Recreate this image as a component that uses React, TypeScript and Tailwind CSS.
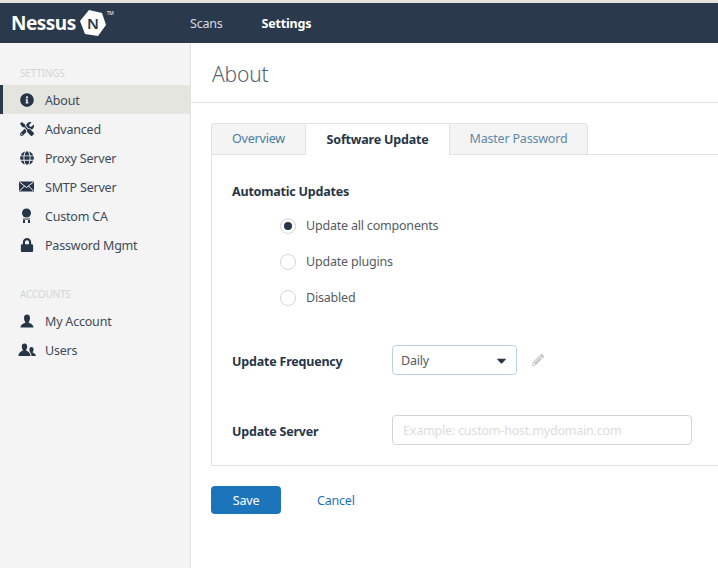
import React from 'react';
import { FaInfoCircle, FaGlobe, FaLock, FaTools, FaPencilAlt, FaCaretDown } from 'react-icons/fa';

type IconProps = { size?: number };

const MailIcon = ({ size = 15 }: IconProps) => (
  <svg width={size} height={size} viewBox="0 0 15 15">
    <rect x="0" y="2.5" width="15" height="10" fill="currentColor" />
    <path d="M0.5 3 L7.5 8.5 L14.5 3 M0.5 12 L5.5 7 M14.5 12 L9.5 7" stroke="#f4f4f4" strokeWidth="1" fill="none" />
  </svg>
);

const RibbonIcon = ({ size = 15 }: IconProps) => (
  <svg width={size} height={size} viewBox="0 0 15 15">
    <circle cx="7.5" cy="5" r="4.5" fill="currentColor" />
    <path d="M4 10.5 H11 V11.5 H4 Z M4 12 H6 V15 H4 Z M9 12 H11 V15 H9 Z" fill="currentColor" />
  </svg>
);

const UserIcon = ({ size = 14 }: IconProps) => (
  <svg width={size} height={size} viewBox="0 0 14 14">
    <path d="M7 0.5 C9 0.5 10 2 10 4 C10 6 9 7.5 8.5 8.5 C9.5 9.5 13.5 10 13.5 13.5 H0.5 C0.5 10 4.5 9.5 5.5 8.5 C5 7.5 4 6 4 4 C4 2 5 0.5 7 0.5 Z" fill="currentColor" />
  </svg>
);

const UsersIcon = ({ size = 18 }: IconProps) => (
  <svg width={size} height={size} viewBox="0 0 18 18">
    <path d="M6.5 2.5 C8.3 2.5 9.2 3.8 9.2 5.5 C9.2 7.3 8.4 8.6 8 9.6 C9 10.4 12.5 11 12.5 15 H0.5 C0.5 11 4 10.4 5 9.6 C4.6 8.6 3.8 7.3 3.8 5.5 C3.8 3.8 4.7 2.5 6.5 2.5 Z" fill="currentColor" />
    <path d="M13.5 6 C14.9 6 15.6 7 15.6 8.3 C15.6 9.7 15 10.7 14.7 11.4 C15.5 12 17.8 12.4 17.8 15 H13.5 C13.5 13 12.5 11.5 12 11.2 C11.8 10.5 11.4 9.6 11.4 8.3 C11.4 7 12.1 6 13.5 6 Z" fill="currentColor" />
  </svg>
);

const SETTINGS = [
  { name: 'About', icon: FaInfoCircle, size: 14, active: true },
  { name: 'Advanced', icon: FaTools, size: 14 },
  { name: 'Proxy Server', icon: FaGlobe, size: 14 },
  { name: 'SMTP Server', icon: MailIcon, size: 15 },
  { name: 'Custom CA', icon: RibbonIcon, size: 15 },
  { name: 'Password Mgmt', icon: FaLock, size: 14 },
];

const ACCOUNTS = [
  { name: 'My Account', icon: UserIcon, size: 14 },
  { name: 'Users', icon: UsersIcon, size: 18 },
];

const SideItem = ({ item }: { item: { name: string; icon: React.ComponentType<IconProps>; size: number; active?: boolean } }) => (
  <div className={`flex items-center h-[29px] ${item.active ? 'bg-[#e5e5e0] border-l-[3px] border-[#2a3a4c]' : 'border-l-[3px] border-transparent'}`}>
    <div className="w-[23px] ml-[12px] mr-[7px] flex justify-center text-[#263648]">
      <item.icon size={item.size} />
    </div>
    <span className="text-[12.5px] pt-[3px] text-[#3d4a58]">{item.name}</span>
  </div>
);

const Radio = ({ label, checked }: { label: string; checked?: boolean }) => (
  <div className="flex items-center h-[36px] pl-[48px]">
    <div className="w-[16px] h-[16px] rounded-full border border-[#d4d4d4] flex items-center justify-center mr-[10px]">
      {checked && <div className="w-[8px] h-[8px] rounded-full bg-[#263648]" />}
    </div>
    <span className="text-[12.5px] text-[#555b62]">{label}</span>
  </div>
);

export default function App() {
  return (
    <div className="w-[718px] h-[568px] overflow-hidden bg-white flex flex-col tracking-[-0.2px] font-['Noto_Sans',sans-serif]">
      <div className="h-[3px] bg-[#e8e2dc]" />
      <header className="h-[40px] bg-[#2a3a4c] flex items-center">
        <div className="w-[190px] flex items-center pl-[11px]">
          <span className="text-white font-bold text-[19px] tracking-[-0.5px] leading-none">Nessus</span>
          <div className="relative ml-[3px]">
            <svg width="28" height="28" viewBox="0 0 28 28">
              <path d="M10 1 L23 4 L27 16 L19 27 L6 25 L1 12 Z" fill="#fff" />
            </svg>
            <span className="absolute inset-0 flex items-center justify-center text-[#2a3a4c] font-semibold text-[15px]">N</span>
          </div>
          <span className="text-white text-[5px] self-start mt-[1px]">TM</span>
        </div>
        <span className="text-[#d8dde2] text-[12.5px] pt-[2px]">Scans</span>
        <span className="text-white text-[12.5px] font-bold ml-[39px] pt-[2px]">Settings</span>
      </header>
      <div className="flex flex-1">
        <aside className="w-[191px] bg-[#f4f4f4] border-r border-[#e2e2e2]">
          <div className="h-[42px] pt-[23px] pl-[20px] text-[10px] leading-[14px] text-[#d2d6d8]">SETTINGS</div>
          {SETTINGS.map(item => <SideItem key={item.name} item={item} />)}
          <div className="h-[47px] pt-[28px] pl-[20px] text-[10px] leading-[14px] text-[#d2d6d8]">ACCOUNTS</div>
          {ACCOUNTS.map(item => <SideItem key={item.name} item={item} />)}
        </aside>
        <main className="flex-1">
          <div className="h-[60px] border-b border-[#e4e4e4] pl-[21px] pt-[5px] flex items-center">
            <h1 className="text-[21px] font-light text-[#566472]">About</h1>
          </div>
          <div className="pl-[20px] pt-[20px]">
            <div className="flex h-[31px] relative z-10">
              <div className="w-[95px] h-[32px] bg-[#f4f4f4] border border-[#e2e2e2] rounded-tl-sm flex items-center justify-center text-[12.5px] text-[#4a7da3]">Overview</div>
              <div className="w-[143px] h-[33px] bg-white border-t border-[#e2e2e2] flex items-center justify-center text-[12.5px] font-bold text-[#263648]">Software Update</div>
              <div className="w-[139px] h-[32px] bg-[#f4f4f4] border border-[#e2e2e2] rounded-tr-sm flex items-center justify-center text-[12.5px] text-[#5f88a6]">Master Password</div>
            </div>
            <div className="h-[312px] border border-r-0 border-[#e2e2e2] pl-[20px] pt-[28px]">
              <div className="text-[12.5px] font-bold text-[#263648] leading-[18px]">Automatic Updates</div>
              <div className="pt-[7px]">
                <Radio label="Update all components" checked />
                <Radio label="Update plugins" />
                <Radio label="Disabled" />
              </div>
              <div className="flex items-center mt-[29px]">
                <div className="w-[160px] pt-[5px] text-[12.5px] font-bold text-[#263648]">Update Frequency</div>
                <div className="w-[125px] h-[30px] border border-[#b9d3e4] rounded-sm flex items-center justify-between pl-[8px] pr-[7px] text-[12.5px] text-[#555b62]">
                  <span className="pt-[2px]">Daily</span>
                  <FaCaretDown size={15} className="text-[#263648]" />
                </div>
                <FaPencilAlt size={12} className="ml-[15px] text-[#c8c8c8]" />
              </div>
              <div className="flex items-center mt-[40px]">
                <div className="w-[160px] pt-[5px] text-[12.5px] font-bold text-[#263648]">Update Server</div>
                <div className="w-[300px] h-[30px] border border-[#d4d4d4] rounded-sm flex items-center pl-[10px] pt-[2px] text-[12.5px] text-[#dcdcdc]">Example: custom-host.mydomain.com</div>
              </div>
            </div>
            <div className="flex items-center mt-[20px]">
              <button className="w-[70px] h-[28px] pt-[2px] bg-[#1c75bb] rounded-sm text-white text-[12.5px]">Save</button>
              <span className="ml-[36px] pt-[2px] text-[12.5px] text-[#1c75bb]">Cancel</span>
            </div>
          </div>
        </main>
      </div>
    </div>
  );
}
